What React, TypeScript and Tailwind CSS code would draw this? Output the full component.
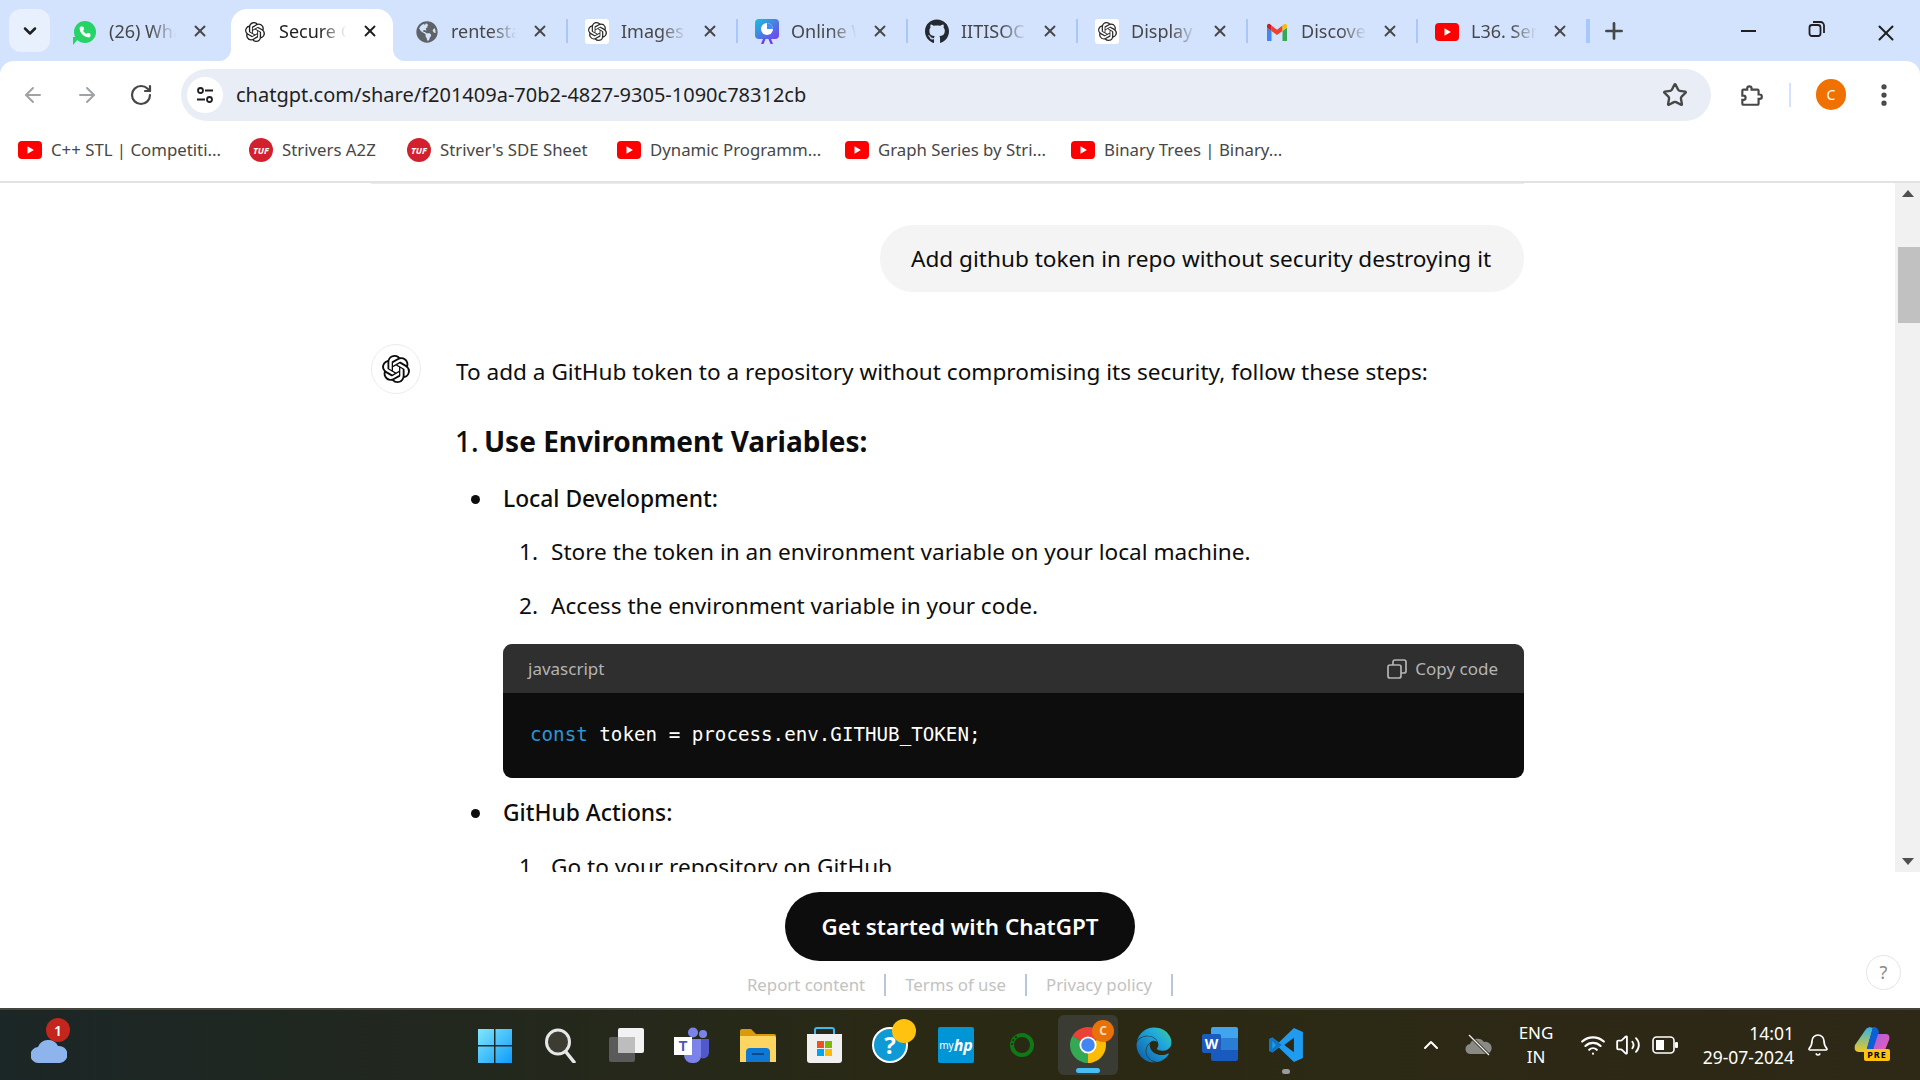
import type { ReactNode } from 'react';
import { ArrowLeft, ArrowRight, Bell, ChevronDown, ChevronUp, MoreVertical, Phone, Plus, RotateCw, Star, Volume2, Wifi, X } from 'lucide-react';
import { FaEdge, FaGithub, FaGlobeAmericas } from 'react-icons/fa';
import { SiOpenai } from 'react-icons/si';

function YoutubeIcon({ className }: { className: string }) {
    return (
        <svg className={className} viewBox="0 0 24 18">
            <rect width="24" height="18" rx="4" fill="#ff0000" />
            <path d="M9.5 5.2v7.6l6.4-3.8z" fill="#fff" />
        </svg>
    );
}

function TufIcon() {
    return (
        <span className="flex h-[24px] w-[24px] shrink-0 items-center justify-center rounded-full bg-[#d3202f] text-[9px] font-bold italic leading-none text-white">
            TUF
        </span>
    );
}

function GptTile() {
    return (
        <span className="flex h-[25px] w-[24px] items-center justify-center rounded-[3px] bg-white">
            <SiOpenai className="h-[19px] w-[19px] text-[#2b2b2b]" />
        </span>
    );
}

function WhatsappIcon() {
    return (
        <span className="relative flex h-[22px] w-[22px] items-center justify-center rounded-full bg-[#25d366]">
            <span className="absolute bottom-[-2px] left-[-1px] h-0 w-0 border-r-[7px] border-t-[8px] border-r-transparent border-t-[#25d366]" />
            <Phone className="h-[12px] w-[12px] fill-white text-white" />
        </span>
    );
}

function OnlineIcon() {
    return (
        <svg className="h-[25px] w-[24px]" viewBox="0 0 24 25">
            <defs>
                <linearGradient id="onlineGrad" x1="0" y1="0" x2="1" y2="1">
                    <stop offset="0" stopColor="#14c4d8" />
                    <stop offset="1" stopColor="#7a3cf0" />
                </linearGradient>
            </defs>
            <rect width="24" height="20" rx="4" fill="url(#onlineGrad)" />
            <path d="M8 20l-2 5h2.5l2-5zM16 20l2 5h-2.5l-2-5z" fill="#6a3ff0" />
            <circle cx="12" cy="10" r="6" fill="#fff" />
            <path d="M12 10V4a6 6 0 0 1 6 6z" fill="#3f8ef0" />
        </svg>
    );
}

function GmailIcon() {
    return (
        <svg className="h-[24px] w-[24px]" viewBox="0 0 24 24">
            <path d="M2 21h4.5V11L2 7.5z" fill="#4285f4" />
            <path d="M22 21h-4.5V11L22 7.5z" fill="#34a853" />
            <path d="M6.5 11V5.5l5.5 4.2 5.500-4.200V11L12 15z" fill="#ea4335" />
            <path d="M17.500 5.500V11L22 7.500V6c0-2-2-3-3.500-1.600z" fill="#fbbc04" />
            <path d="M6.500 5.500V11L2 7.500V6c0-2 2-3 3.500-1.600z" fill="#c5221f" />
        </svg>
    );
}

const tabs: { title: string; icon: ReactNode; active?: boolean; separator?: boolean }[] = [
    { title: '(26) WhatsApp', icon: <WhatsappIcon /> },
    { title: 'Secure GitHub', icon: <SiOpenai className="h-[20px] w-[20px] text-[#1f1f1f]" />, active: true },
    { title: 'rentestate', icon: <FaGlobeAmericas className="h-[22px] w-[22px] text-[#5f6368]" />, separator: true },
    { title: 'Images Generator', icon: <GptTile />, separator: true },
    { title: 'Online Whiteboard', icon: <OnlineIcon />, separator: true },
    { title: 'IITISOC-24', icon: <FaGithub className="h-[25px] w-[25px] text-[#24292f]" />, separator: true },
    { title: 'Display', icon: <GptTile />, separator: true },
    { title: 'Discover', icon: <GmailIcon />, separator: true },
    { title: 'L36. Serialize', icon: <YoutubeIcon className="h-[18px] w-[24px]" />, separator: true },
];

const bookmarks: { title: string; tuf?: boolean; width: string }[] = [
    { title: 'C++ STL | Competiti...', width: 'w-[231px]' },
    { title: 'Strivers A2Z', tuf: true, width: 'w-[158px]' },
    { title: "Striver's SDE Sheet", tuf: true, width: 'w-[210px]' },
    { title: 'Dynamic Programm...', width: 'w-[228px]' },
    { title: 'Graph Series by Stri...', width: 'w-[226px]' },
    { title: 'Binary Trees | Binary...', width: 'w-[220px]' },
];

function TabStrip() {
    return (
        <div className="flex h-[61px] pl-[9px] pt-[9px]">
            <button className="mr-[8px] flex h-[43px] w-[41px] items-center justify-center rounded-[12px] bg-[#e8f0fe]">
                <ChevronDown className="h-[20px] w-[20px] text-[#1f1f1f]" strokeWidth={3} />
            </button>
            {tabs.map((tab) => (
                <div
                    key={tab.title}
                    className={
                        tab.active
                            ? 'relative ml-[3px] mr-[5px] flex h-[52px] w-[162px] shrink-0 items-start rounded-t-[16px] bg-white pl-[12px] pt-[10px]'
                            : `relative flex h-[52px] w-[170px] shrink-0 items-start pt-[10px] ${tab.separator ? 'pl-[17px]' : 'pl-[15px]'}`
                    }
                >
                    {tab.active && (
                        <>
                            <svg className="absolute bottom-0 left-[-12px] h-[12px] w-[12px]" viewBox="0 0 12 12">
                                <path d="M12 0v12H0a12 12 0 0 0 12-12z" fill="#fff" />
                            </svg>
                            <svg className="absolute bottom-0 right-[-12px] h-[12px] w-[12px]" viewBox="0 0 12 12">
                                <path d="M0 0v12h12A12 12 0 0 1 0 0z" fill="#fff" />
                            </svg>
                        </>
                    )}
                    <span className="flex h-[25px] w-[24px] shrink-0 items-center justify-center">{tab.icon}</span>
                    <span
                        className={`ml-[12px] h-[25px] overflow-hidden whitespace-nowrap text-[18px] leading-[25px] [mask-image:linear-gradient(to_right,black_50%,transparent_82%)] ${tab.separator ? 'w-[80px]' : 'w-[82px]'} ${tab.active ? 'text-[#1f1f1f]' : 'text-[#474747]'}`}
                    >
                        {tab.title}
                    </span>
                    <X className={`mt-[3px] h-[18px] w-[18px] shrink-0 ${tab.active ? 'text-[#1f1f1f]' : 'text-[#474747]'}`} strokeWidth={2.5} />
                    {tab.separator && <span className="absolute right-0 top-[10px] h-[24px] w-[2px] bg-[#a8c7fa]" />}
                </div>
            ))}
            <span className="mr-[-1px] mt-[10px] h-[24px] w-[2px] bg-[#a8c7fa]" />
            <Plus className="ml-[12px] mt-[9px] h-[26px] w-[26px] text-[#474747]" strokeWidth={2.5} />
            <div className="ml-[114px] mt-[11px] flex items-start">
                <div className="mt-[10px] h-[2px] w-[15px] bg-[#1f1f1f]" />
                <svg className="ml-[52px] h-[18px] w-[18px]" viewBox="0 0 18 18" fill="none" stroke="#1f1f1f" strokeWidth="1.800">
                    <rect x="1.500" y="5" width="11" height="11" rx="2.500" />
                    <path d="M5 2h7.500A3.500 3.500 0 0 1 16 5.500V13" />
                </svg>
                <X className="ml-[47px] h-[26px] w-[26px] text-[#1f1f1f]" strokeWidth={1.800} />
            </div>
        </div>
    );
}

function Toolbar() {
    return (
        <div className="flex h-[70px] items-center rounded-t-[14px] bg-white pb-[3px] pl-[21px]">
            <ArrowLeft className="h-[24px] w-[24px] shrink-0 text-[#a0a3a6]" strokeWidth={2} />
            <ArrowRight className="ml-[30px] h-[24px] w-[24px] shrink-0 text-[#a0a3a6]" strokeWidth={2} />
            <RotateCw className="ml-[30px] h-[24px] w-[24px] shrink-0 text-[#474747]" strokeWidth={2.200} />
            <div className="ml-[28px] flex h-[52px] w-[1530px] shrink-0 items-center rounded-full bg-[#e9eef6] pl-[6px] pr-[23px]">
                <span className="flex h-[36px] w-[36px] items-center justify-center rounded-full bg-white">
                    <svg className="h-[20px] w-[20px]" viewBox="0 0 20 20" fill="none" stroke="#1f1f1f" strokeWidth="1.800">
                        <circle cx="5.500" cy="5.500" r="2.500" />
                        <path d="M10 5.500h8M2 14.500h8" />
                        <circle cx="14.500" cy="14.500" r="2.500" />
                    </svg>
                </span>
                <span className="ml-[13px] flex-1 whitespace-nowrap text-[20px] leading-[28px] text-[#1f1f1f]">
                    chatgpt.com/share/f201409a-70b2-4827-9305-1090c78312cb
                </span>
                <Star className="h-[26px] w-[26px] text-[#474747]" strokeWidth={2.200} />
            </div>
            <svg className="ml-[27px] h-[26px] w-[26px] shrink-0" viewBox="0 0 24 24" fill="none" stroke="#474747" strokeWidth="2">
                <path d="M5 7h3.500V6a2 2 0 0 1 4 0v1H18a1 1 0 0 1 1 1v3.500h1a2 2 0 0 1 0 4h-1V20a1 1 0 0 1-1 1H5a1 1 0 0 1-1-1v-3.500h1a2 2 0 0 0 0-4H4V8a1 1 0 0 1 1-1z" />
            </svg>
            <span className="ml-[25px] h-[24px] w-[2px] shrink-0 bg-[#d3e3fd]" />
            <span className="ml-[25px] flex h-[31px] w-[30px] shrink-0 items-center justify-center rounded-full bg-[#f07000] text-[14px] text-white">C</span>
            <MoreVertical className="ml-[24px] h-[28px] w-[28px] shrink-0 text-[#474747]" strokeWidth={2.500} />
        </div>
    );
}

function BookmarksBar() {
    return (
        <div className="flex h-[52px] items-center border-b-2 border-[#e2e2e2] bg-white pb-[12px] pl-[18px]">
            {bookmarks.map((item) => (
                <div key={item.title} className={`flex shrink-0 items-center ${item.width}`}>
                    {item.tuf ? <TufIcon /> : <YoutubeIcon className="h-[18px] w-[24px] shrink-0" />}
                    <span className="ml-[9px] whitespace-nowrap text-[16.8px] leading-[24px] text-[#474747]">{item.title}</span>
                </div>
            ))}
        </div>
    );
}

function Bullet({ children }: { children: ReactNode }) {
    return (
        <div className="flex items-center text-[22.8px] font-medium leading-[40px] text-[#0d0d0d]">
            <span className="ml-[16px] mr-[23px] h-[9px] w-[9px] rounded-full bg-[#0d0d0d]" />
            {children}
        </div>
    );
}

function Step({ n, children, className }: { n: number; children: ReactNode; className: string }) {
    return (
        <div className={`flex pl-[64px] text-[22.6px] leading-[40px] text-[#0d0d0d] ${className}`}>
            <span className="w-[32px]">{n}.</span>
            {children}
        </div>
    );
}

function CodeBlock() {
    return (
        <div className="ml-[48px] mt-[18px] overflow-hidden rounded-[9px]">
            <div className="flex h-[49px] items-center justify-between bg-[#2f2f2f] pl-[25px] pr-[26px] text-[17px] text-[#b4b4b4]">
                <span>javascript</span>
                <span className="flex items-center gap-[8px]">
                    <svg className="h-[20px] w-[20px]" viewBox="0 0 20 20" fill="none" stroke="#b4b4b4" strokeWidth="1.700">
                        <rect x="1" y="6" width="13" height="13" rx="2" />
                        <path d="M6 6V3a2 2 0 0 1 2-2h9a2 2 0 0 1 2 2v9a2 2 0 0 1-2 2h-3" />
                    </svg>
                    Copy code
                </span>
            </div>
            <div className="flex h-[85px] items-center bg-[#0d0d0d] pl-[27px] font-['DejaVu_Sans_Mono',monospace] text-[19.2px] text-white">
                <span className="text-[#2e95d3]">const</span>
                <span className="whitespace-pre"> token = process.env.GITHUB_TOKEN;</span>
            </div>
        </div>
    );
}

function Conversation() {
    return (
        <div className="min-h-0 flex-1 overflow-hidden pl-[371px]">
            <div className="w-[1153px]">
                <div className="h-px bg-[#ececec]" />
                <div className="mt-[41px] flex justify-end">
                    <div className="flex h-[67px] w-[644px] items-center rounded-[33px] bg-[#f4f4f4] pl-[31px] text-[22.6px] text-[#0d0d0d]">
                        Add github token in repo without security destroying it
                    </div>
                </div>
                <div className="mt-[52px] flex gap-[34px]">
                    <div className="flex h-[50px] w-[50px] shrink-0 items-center justify-center rounded-full border border-[#ececec]">
                        <SiOpenai className="h-[28px] w-[28px] text-[#0d0d0d]" />
                    </div>
                    <div className="w-[1069px] pt-[8px]">
                        <p className="ml-[1px] text-[22.6px] leading-[40px] text-[#0d0d0d]">
                            To add a GitHub token to a repository without compromising its security, follow these steps:
                        </p>
                        <h3 className="mb-[18px] mt-[29px] text-[28px] font-medium leading-[40px] text-[#0d0d0d]">
                            1. <strong className="ml-[-2px] font-bold">Use Environment Variables:</strong>
                        </h3>
                        <Bullet>Local Development:</Bullet>
                        <Step n={1} className="mt-[13px]">Store the token in an environment variable on your local machine.</Step>
                        <Step n={2} className="mt-[14px]">Access the environment variable in your code.</Step>
                        <CodeBlock />
                        <div className="mt-[15px]">
                            <Bullet>GitHub Actions:</Bullet>
                        </div>
                        <Step n={1} className="mt-[14px]">Go to your repository on GitHub.</Step>
                    </div>
                </div>
            </div>
        </div>
    );
}

function Scrollbar() {
    return (
        <div className="flex w-[25px] shrink-0 flex-col items-center bg-[#f1f1f1]">
            <span className="mt-[7px] h-0 w-0 border-x-[6px] border-b-[7px] border-x-transparent border-b-[#505050]" />
            <span className="mt-[50px] h-[76px] w-[22px] self-end bg-[#c1c1c1]" />
            <span className="mb-[7px] mt-auto h-0 w-0 border-x-[6px] border-t-[7px] border-x-transparent border-t-[#505050]" />
        </div>
    );
}

function Footer() {
    return (
        <div className="relative flex h-[136px] flex-col items-center bg-white pt-[20px]">
            <button className="flex h-[69px] w-[350px] items-center justify-center rounded-full bg-[#0d0d0d] text-[22.4px] font-semibold text-white">
                Get started with ChatGPT
            </button>
            <div className="mt-[12px] flex items-center gap-[19px] text-[16.8px] leading-[24px] text-[#c2c2c2]">
                <span>Report content</span>
                <span className="h-[22px] w-[2px] bg-[#b9c5da]" />
                <span>Terms of use</span>
                <span className="h-[22px] w-[2px] bg-[#b9c5da]" />
                <span>Privacy policy</span>
                <span className="h-[22px] w-[2px] bg-[#b9c5da]" />
            </div>
            <span className="absolute bottom-[18px] right-[19px] flex h-[35px] w-[35px] items-center justify-center rounded-full border border-[#e5e5e5] text-[18px] text-[#8a8a8a]">
                ?
            </span>
        </div>
    );
}

const taskbarIcons: { name: string; node: ReactNode }[] = [
    {
        name: 'start',
        node: (
            <svg className="h-[35px] w-[35px]" viewBox="0 0 35 35">
                <defs>
                    <linearGradient id="winGrad" x1="0" y1="0" x2="1" y2="1">
                        <stop offset="0" stopColor="#7fe7fb" />
                        <stop offset="1" stopColor="#0f9bfa" />
                    </linearGradient>
                </defs>
                <path d="M1 1h16v16H1zM18.500 1H35v16H18.500zM1 18.500h16V35H1zM18.500 18.500H35V35H18.500z" fill="url(#winGrad)" />
            </svg>
        ),
    },
    {
        name: 'search',
        node: (
            <svg className="h-[35px] w-[33px]" viewBox="0 0 33 35" fill="none">
                <ellipse cx="14" cy="14" rx="11.500" ry="12" fill="#3d3c33" stroke="#e7e7e7" strokeWidth="3" />
                <path d="M22 24l8 10" stroke="#e7e7e7" strokeWidth="3.500" strokeLinecap="round" />
            </svg>
        ),
    },
    {
        name: 'task view',
        node: (
            <svg className="h-[35px] w-[35px]" viewBox="0 0 35 35">
                <rect x="0" y="9" width="26" height="25" rx="2" fill="#5a5a5a" />
                <rect x="9" y="0" width="26" height="25" rx="2" fill="#f2f2f2" />
                <rect x="9" y="9" width="17" height="16" fill="#bdbdbd" />
            </svg>
        ),
    },
    {
        name: 'teams',
        node: (
            <svg className="h-[36px] w-[36px]" viewBox="0 0 36 36">
                <circle cx="29" cy="7" r="4" fill="#7b83eb" />
                <circle cx="19" cy="5.500" r="5" fill="#7b83eb" />
                <path d="M24 12h11v14a6 6 0 0 1-8 5z" fill="#5059c9" />
                <path d="M10 12h17v17a7 7 0 0 1-7 7h-2a8 8 0 0 1-8-8z" fill="#7b83eb" />
                <rect x="0" y="10" width="18" height="18" fill="#fff" />
                <text x="9" y="24" textAnchor="middle" fontSize="14" fontWeight="700" fill="#4b53bc" fontFamily="Liberation Sans, sans-serif">T</text>
            </svg>
        ),
    },
    {
        name: 'files',
        node: (
            <svg className="h-[33px] w-[36px]" viewBox="0 0 36 33">
                <path d="M0 2a2 2 0 0 1 2-2h9l5 5h18a2 2 0 0 1 2 2v5H0z" fill="#d99a0c" />
                <path d="M0 7h34a2 2 0 0 1 2 2v24H0z" fill="#fdd662" />
                <path d="M6 33v-10a4 4 0 0 1 4-4h16a4 4 0 0 1 4 4v10z" fill="#0f78d4" />
                <rect x="12" y="24" width="12" height="2" fill="#0b4a8a" />
            </svg>
        ),
    },
    {
        name: 'store',
        node: (
            <svg className="h-[36px] w-[35px]" viewBox="0 0 35 36">
                <path d="M8 8V3a2 2 0 0 1 2-2h15a2 2 0 0 1 2 2v5" fill="none" stroke="#3db8f0" strokeWidth="2" />
                <path d="M0 7h35v26a3 3 0 0 1-3 3H3a3 3 0 0 1-3-3z" fill="#f0f0f0" />
                <rect x="10" y="14" width="7" height="7" fill="#f25022" />
                <rect x="18" y="14" width="7" height="7" fill="#7fba00" />
                <rect x="10" y="22" width="7" height="7" fill="#00a4ef" />
                <rect x="18" y="22" width="7" height="7" fill="#ffb900" />
            </svg>
        ),
    },
    {
        name: 'help',
        node: (
            <span className="relative flex h-[36px] w-[36px] items-center justify-center rounded-full border-2 border-white bg-[#0f9ad6] text-[24px] font-bold leading-none text-white">
                ?
                <span className="absolute right-[-10px] top-[-10px] h-[24px] w-[24px] rounded-full bg-[#ffc20e]" />
            </span>
        ),
    },
    {
        name: 'myhp',
        node: (
            <span className="flex h-[36px] w-[36px] items-center justify-center rounded-[2px] bg-[#0096d6] text-[10px] leading-none text-white">
                my<span className="text-[16px] font-bold italic">hp</span>
            </span>
        ),
    },
    {
        name: 'ring',
        node: (
            <svg className="h-[26px] w-[26px]" viewBox="0 0 26 26" fill="none">
                <circle cx="13" cy="13" r="10" stroke="#0d7a17" strokeWidth="4" />
                <path d="M3 13a10 10 0 0 1 5-8.600" stroke="#2b2b18" strokeWidth="2" strokeDasharray="2 2" />
            </svg>
        ),
    },
    {
        name: 'chrome',
        node: (
            <span className="relative flex h-[60px] w-[60px] items-center justify-center rounded-[6px] bg-[#3a3b32]">
                <svg className="h-[36px] w-[36px]" viewBox="4 4 40 40">
                    <path d="M24 24L6.700 14A20 20 0 0 1 41.300 14z" fill="#ea4335" />
                    <path d="M24 24L41.300 14A20 20 0 0 1 24 44z" fill="#fbbc04" />
                    <path d="M24 24L24 44A20 20 0 0 1 6.700 14z" fill="#34a853" />
                    <circle cx="24" cy="24" r="9.500" fill="#fff" />
                    <circle cx="24" cy="24" r="7.500" fill="#4285f4" />
                </svg>
                <span className="absolute right-[4px] top-[5px] flex h-[22px] w-[22px] items-center justify-center rounded-full bg-[#e8710a] text-[12px] font-bold text-[#fcd9b8]">C</span>
                <span className="absolute bottom-[2px] h-[5px] w-[24px] rounded-full bg-[#47bdf5]" />
            </span>
        ),
    },
    {
        name: 'edge',
        node: <FaEdge className="h-[36px] w-[36px]" fill="url(#edgeGrad)" />,
    },
    {
        name: 'word',
        node: (
            <span className="relative flex h-[36px] w-[36px] justify-end">
                <span className="flex h-[34px] w-[27px] flex-col overflow-hidden rounded-[2px]">
                    <span className="h-1/3 bg-[#41a5ee]" />
                    <span className="h-1/3 bg-[#2b7cd3]" />
                    <span className="h-1/3 bg-[#185abd]" />
                </span>
                <span className="absolute left-0 top-[7px] flex h-[19px] w-[19px] items-center justify-center rounded-[2px] bg-[#1a5bbd] text-[14px] font-bold text-white">W</span>
            </span>
        ),
    },
    {
        name: 'vscode',
        node: (
            <span className="relative flex h-[36px] w-[36px] items-center justify-center">
                <svg className="h-[36px] w-[36px]" viewBox="0 0 100 100">
                    <path d="M72 3L30 43 12 29 3 34v32l9 5 18-14 42 40 25-11V14zM72 30v40L45 50z" fill="#1f9cf0" fillRule="evenodd" />
                    <path d="M12 29L3 34v32l9 5 18-14 8-7-8-7zM12 39l10 11-10 11z" fill="#0f76c2" fillRule="evenodd" />
                </svg>
                <span className="absolute bottom-[-11px] h-[5px] w-[8px] rounded-full bg-[#9a9a9a]" />
            </span>
        ),
    },
];

function Taskbar() {
    return (
        <div className="flex h-[72px] shrink-0 items-center border-t-2 border-[#46453d] bg-gradient-to-r from-[#1b2626] via-[#2a2913] to-[#2e2817] text-white">
            <svg width="0" height="0" className="absolute">
                <defs>
                    <linearGradient id="edgeGrad" x1="1" y1="0" x2="0" y2="1">
                        <stop offset="0" stopColor="#3ccf8e" />
                        <stop offset="0.35" stopColor="#1fa8de" />
                        <stop offset="1" stopColor="#0c59a4" />
                    </linearGradient>
                </defs>
            </svg>
            <div className="w-[461px] shrink-0 pl-[31px]">
                <div className="relative h-[36px] w-[36px]">
                    <svg className="absolute bottom-0 left-0 h-[24px] w-[36px]" viewBox="0 0 36 24">
                        <path d="M8 24a8 8 0 0 1-1-16 11 11 0 0 1 20-1 8.500 8.500 0 0 1 2 17z" fill="#8db4ec" />
                    </svg>
                    <span className="absolute left-[15px] top-[-9px] flex h-[24px] w-[24px] items-center justify-center rounded-full bg-[#c4261d] text-[14px] font-semibold">1</span>
                </div>
            </div>
            {taskbarIcons.map((icon) => (
                <div key={icon.name} className="flex w-[66px] shrink-0 justify-center">
                    {icon.node}
                </div>
            ))}
            <ChevronUp className="ml-[100px] h-[24px] w-[24px] shrink-0 text-white" strokeWidth={2} />
            <svg className="ml-[22px] h-[24px] w-[28px] shrink-0" viewBox="0 0 28 24">
                <path d="M6 21a5 5 0 0 1-1-10 8 8 0 0 1 14-2 6 6 0 0 1 3 12z" fill="#8a8a84" />
                <path d="M4 2l20 20" stroke="#2b2718" strokeWidth="3" />
                <path d="M4 2l20 20" stroke="#f2f2f2" strokeWidth="1.300" />
            </svg>
            <div className="ml-[13px] w-[60px] shrink-0 text-center text-[17px] leading-[24px]">
                <div>ENG</div>
                <div>IN</div>
            </div>
            <Wifi className="ml-[14px] h-[26px] w-[26px] shrink-0" strokeWidth={2} />
            <Volume2 className="ml-[9px] h-[26px] w-[26px] shrink-0" strokeWidth={1.700} />
            <svg className="ml-[11px] h-[18px] w-[26px] shrink-0" viewBox="0 0 26 18" fill="none">
                <rect x="1" y="1" width="21" height="16" rx="3.500" stroke="#fff" strokeWidth="1.600" />
                <rect x="4" y="4" width="8" height="10" fill="#fff" />
                <rect x="23" y="6" width="3" height="6" rx="1" fill="#fff" />
            </svg>
            <div className="ml-[10px] w-[106px] shrink-0 text-right text-[17.5px] leading-[24px]">
                <div>14:01</div>
                <div>29-07-2024</div>
            </div>
            <Bell className="ml-[12px] h-[24px] w-[24px] shrink-0" strokeWidth={1.700} />
            <span className="relative ml-[24px] h-[36px] w-[36px] shrink-0">
                <svg className="h-[30px] w-[36px]" viewBox="0 0 36 30">
                    <defs>
                        <linearGradient id="copilotA" x1="0" y1="0" x2="0" y2="1">
                            <stop offset="0" stopColor="#2fb4e8" />
                            <stop offset="1" stopColor="#f2c81e" />
                        </linearGradient>
                        <linearGradient id="copilotB" x1="0" y1="0" x2="1" y2="1">
                            <stop offset="0" stopColor="#a55fe8" />
                            <stop offset="1" stopColor="#f25ca8" />
                        </linearGradient>
                    </defs>
                    <path d="M12 2c2-2 5-2 7-1l-7 24H5c-4 0-5-3-4-7z" fill="url(#copilotA)" />
                    <path d="M19 0c4 0 5 2 6 5l-5 16-8 4z" fill="#0d5fd8" />
                    <path d="M24 7h8c3 0 4 3 3 6l-4 10c-1 2-3 3-5 3h-8z" fill="url(#copilotB)" />
                </svg>
                <span className="absolute bottom-[2px] right-0 flex h-[12px] w-[26px] items-center justify-center rounded-[2px] bg-[#ffc20e] text-[9px] font-bold tracking-[1px] text-black">PRE</span>
            </span>
        </div>
    );
}

export default function App() {
    return (
        <div className="flex h-[1080px] w-[1920px] flex-col overflow-hidden bg-white font-['Noto_Sans',sans-serif]">
            <header className="shrink-0 bg-[#d3e3fd]">
                <TabStrip />
                <Toolbar />
                <BookmarksBar />
            </header>
            <div className="flex min-h-0 flex-1 flex-col">
                <div className="flex min-h-0 flex-1">
                    <Conversation />
                    <Scrollbar />
                </div>
                <Footer />
            </div>
            <Taskbar />
        </div>
    );
}
